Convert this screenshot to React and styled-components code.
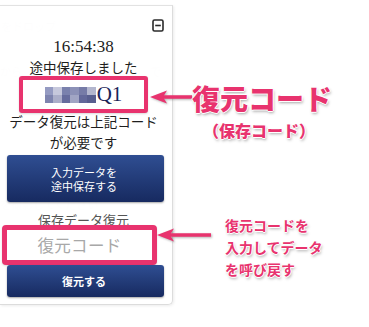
import React from "react";
import styled, { createGlobalStyle } from "styled-components";

const Global = createGlobalStyle`
  html, body { margin: 0; padding: 0; background: #fff; }
  body { font-family: "Noto Sans CJK JP", "Noto Sans", sans-serif; }
  * { box-sizing: border-box; }
`;

const PINK = "#e8336e";

const Page = styled.div`
  position: relative;
  width: 369px;
  height: 327px;
  overflow: hidden;
  background: #fff;
`;

const Ghost = styled.span`
  position: absolute;
  left: ${(p) => p.$x}px;
  top: ${(p) => p.$y}px;
  font-size: 11px;
  line-height: 12px;
  color: #ececec;
  white-space: nowrap;
  z-index: 0;
`;

const Card = styled.div`
  position: relative;
  z-index: 1;
  margin-top: 5px;
  width: 173px;
  display: flex;
  flex-direction: column;
  padding: 13px 8px 7px 7px;
  background: rgba(255, 255, 255, 0.9);
  border-top: 1px solid #e2e2e2;
  border-right: 1px solid #dcdcdc;
  border-bottom: 1px solid #dcdcdc;
  border-bottom-right-radius: 5px;
  box-shadow: 1px 1px 3px rgba(0, 0, 0, 0.08);
`;

const IconRow = styled.div`
  display: flex;
  justify-content: flex-end;
  height: 12px;
`;

const Line = styled.div`
  text-align: center;
  padding-right: 4px;
  color: #1e1e1e;
  white-space: nowrap;
  font-size: ${(p) => p.$size || 13.5}px;
  line-height: ${(p) => p.$lh || 21}px;
  margin-top: ${(p) => p.$mt || 0}px;
`;

const Time = styled(Line)`
  font-family: "Liberation Serif", "Noto Sans CJK JP", serif;
`;

const CodeBox = styled.div`
  align-self: flex-start;
  margin-left: 12px;
  width: 129px;
  height: 37px;
  border: 4px solid ${PINK};
  border-radius: 3px;
  background: #fff;
  display: flex;
  align-items: center;
  justify-content: center;
  box-shadow: 0 1px 2px rgba(0, 0, 0, 0.15);
`;

const Mosaic = styled.div`
  display: grid;
  grid-template-columns: repeat(6, 8.5px);
  grid-template-rows: repeat(2, 8px);
`;

const Cell = styled.div`
  background: ${(p) => p.$c};
`;

const CodeText = styled.span`
  font-family: "Liberation Serif", serif;
  font-size: 21px;
  line-height: 21px;
  color: #1b2458;
  margin-left: 1px;
`;

const NavyButton = styled.button`
  display: flex;
  flex-direction: column;
  align-items: center;
  justify-content: center;
  width: 100%;
  height: ${(p) => p.$h}px;
  margin-top: ${(p) => p.$mt || 0}px;
  border: none;
  border-radius: 3px;
  background: linear-gradient(#2f4e92, #172a60);
  box-shadow: 0 1px 2px rgba(0, 0, 0, 0.35);
  color: #fff;
  font-family: "Noto Sans CJK JP", sans-serif;
  font-size: 11px;
  line-height: 15px;
  font-weight: ${(p) => (p.$bold ? 700 : 400)};
  text-align: center;
  padding: 0 3px 0 0;
`;

const ButtonLine = styled.span`
  display: block;
  line-height: 14px;
`;

const SectionTitle = styled(Line)`
  color: #555;
  font-size: 13px;
  line-height: 16px;
`;

const InputBox = styled.div`
  align-self: flex-start;
  margin-left: -5px;
  margin-top: -3px;
  width: 155px;
  height: 40px;
  border: 5px solid ${PINK};
  border-radius: 4px;
  background: #fff;
  display: flex;
  align-items: center;
  justify-content: center;
  color: #a8a8a8;
  font-size: 16.5px;
  letter-spacing: 0.3px;
  box-shadow: 0 1px 2px rgba(0, 0, 0, 0.15);
`;

const Callout = styled.div`
  position: absolute;
  left: ${(p) => p.$x}px;
  top: ${(p) => p.$y}px;
  z-index: 2;
  color: ${PINK};
  font-weight: ${(p) => p.$weight || 700};
  white-space: nowrap;
  font-size: ${(p) => p.$size}px;
  line-height: ${(p) => p.$lh}px;
  text-shadow: 1px 0 0 #fff, -1px 0 0 #fff, 0 1px 0 #fff, 0 -1px 0 #fff,
    1px 2px 3px rgba(0, 0, 0, 0.35);
`;

const ArrowSvg = styled.svg`
  position: absolute;
  left: ${(p) => p.$x}px;
  top: ${(p) => p.$y}px;
  z-index: 2;
  overflow: visible;
  filter: drop-shadow(1px 1px 1px rgba(0, 0, 0, 0.3));
`;

const MinusBox = () => (
  <svg width="12" height="13" viewBox="0 0 12 13">
    <rect x="1" y="1" width="10" height="11" rx="1.5" fill="none" stroke="#2a2a2a" strokeWidth="1.6" />
    <line x1="3.2" y1="6.5" x2="8.8" y2="6.5" stroke="#2a2a2a" strokeWidth="1.6" />
  </svg>
);

const Arrow = ({ x, y, len }) => (
  <ArrowSvg $x={x} $y={y} width={len} height="14" viewBox={`0 0 ${len} 14`}>
    <line x1="12" y1="7" x2={len} y2="7" stroke={PINK} strokeWidth="3.5" />
    <polygon points="0,7 17,0.5 13,7 17,13.5" fill={PINK} />
  </ArrowSvg>
);

const mosaic = [
  "#959bc2", "#c6c8dc", "#7a81ad", "#8c91b7", "#767ba7", "#b3b6ce",
  "#7e84af", "#abaec9", "#666c9d", "#a1a5c4", "#63689a", "#585e8f",
];

export default function App() {
  return (
    <Page>
      <Global />
      <Ghost $x={1} $y={20}>をドロップ</Ghost>
      <Ghost $x={0} $y={65}>から</Ghost>
      <Ghost $x={150} $y={65}>で</Ghost>
      <Ghost $x={0} $y={198}>を撮影してください</Ghost>
      <Card>
        <IconRow>
          <MinusBox />
        </IconRow>
        <Time $size={17} $lh={20} $mt={6}>16:54:38</Time>
        <Line $lh={18} $mt={1}>途中保存しました</Line>
        <CodeBox>
          <Mosaic>
            {mosaic.map((c, i) => (
              <Cell key={i} $c={c} />
            ))}
          </Mosaic>
          <CodeText>Q1</CodeText>
        </CodeBox>
        <Line $mt={-2}>データ復元は上記コード</Line>
        <Line>が必要です</Line>
        <NavyButton $h={47} $mt={2}>
          <ButtonLine>入力データを</ButtonLine>
          <ButtonLine>途中保存する</ButtonLine>
        </NavyButton>
        <SectionTitle $mt={10}>保存データ復元</SectionTitle>
        <InputBox>復元コード</InputBox>
        <NavyButton $h={32} $bold>
          <ButtonLine>復元する</ButtonLine>
        </NavyButton>
      </Card>

      <Arrow x={150} y={90} len={42} />
      <Callout $x={192} $y={80} $size={28} $lh={36} $weight={900}>復元コード</Callout>
      <Callout $x={203} $y={118} $size={16} $lh={24} $weight={900}>（保存コード）</Callout>

      <Arrow x={157} y={228} len={54} />
      <Callout $x={225} $y={214} $size={14} $lh={22}>
        復元コードを
        <br />
        入力してデータ
        <br />
        を呼び戻す
      </Callout>
    </Page>
  );
}
